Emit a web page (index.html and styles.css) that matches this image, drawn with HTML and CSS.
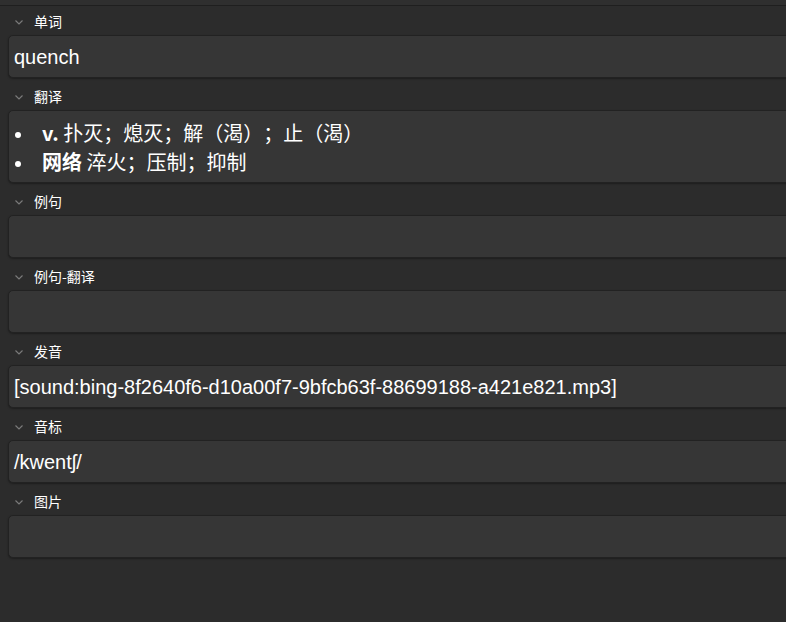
FILE: index.html
```html
<!DOCTYPE html>
<html lang="zh">
<head>
<meta charset="utf-8">
<title>Editor</title>
<link rel="stylesheet" href="styles.css">
</head>
<body>
<div class="topstrip"></div>
<div class="fields">
  <div class="field-block">
    <div class="label-row"><svg class="chev" viewBox="0 0 8 5"><path d="M0.5 0.5 L4 4 L7.5 0.5"/></svg><span class="label">单词</span></div>
    <div class="field"><div class="content">quench</div></div>
  </div>
  <div class="field-block">
    <div class="label-row"><svg class="chev" viewBox="0 0 8 5"><path d="M0.5 0.5 L4 4 L7.5 0.5"/></svg><span class="label">翻译</span></div>
    <div class="field field-rich">
      <ul class="defs">
        <li><b>v.</b> 扑灭；熄灭；解（渴）；止（渴）</li>
        <li><b>网络</b> 淬火；压制；抑制</li>
      </ul>
    </div>
  </div>
  <div class="field-block">
    <div class="label-row"><svg class="chev" viewBox="0 0 8 5"><path d="M0.5 0.5 L4 4 L7.5 0.5"/></svg><span class="label">例句</span></div>
    <div class="field"><div class="content"></div></div>
  </div>
  <div class="field-block">
    <div class="label-row"><svg class="chev" viewBox="0 0 8 5"><path d="M0.5 0.5 L4 4 L7.5 0.5"/></svg><span class="label">例句-翻译</span></div>
    <div class="field"><div class="content"></div></div>
  </div>
  <div class="field-block">
    <div class="label-row"><svg class="chev" viewBox="0 0 8 5"><path d="M0.5 0.5 L4 4 L7.5 0.5"/></svg><span class="label">发音</span></div>
    <div class="field"><div class="content">[sound:bing-8f2640f6-d10a00f7-9bfcb63f-88699188-a421e821.mp3]</div></div>
  </div>
  <div class="field-block">
    <div class="label-row"><svg class="chev" viewBox="0 0 8 5"><path d="M0.5 0.5 L4 4 L7.5 0.5"/></svg><span class="label">音标</span></div>
    <div class="field"><div class="content">/kwentʃ/</div></div>
  </div>
  <div class="field-block">
    <div class="label-row"><svg class="chev" viewBox="0 0 8 5"><path d="M0.5 0.5 L4 4 L7.5 0.5"/></svg><span class="label">图片</span></div>
    <div class="field"><div class="content"></div></div>
  </div>
</div>
</body>
</html>
```

FILE: styles.css
```css
html, body {
  margin: 0;
  padding: 0;
}
body {
  background: #2c2c2c;
  color: #ffffff;
  font-family: "Liberation Sans", "Noto Sans CJK SC", sans-serif;
  overflow: hidden;
  width: 786px;
  height: 622px;
}
.topstrip {
  height: 5px;
  background: #2f2f2f;
  border-bottom: 1px solid #1f1f1f;
}
.fields {
  display: flex;
  flex-direction: column;
}
.field-block {
  display: flex;
  flex-direction: column;
  margin-bottom: 3px;
}
.label-row {
  height: 29px;
  display: flex;
  align-items: center;
  padding-left: 15px;
  gap: 11px;
}
.chev {
  width: 8px;
  height: 5px;
  margin-top: 4px;
  fill: none;
  stroke: #7a7a7a;
  stroke-width: 1.2;
}
.label {
  font-family: "Noto Sans CJK SC", sans-serif;
  font-size: 14px;
  line-height: 16px;
  color: #ffffff;
}
.field {
  margin-left: 8px;
  margin-right: -12px;
  background: #363636;
  border: 1px solid #222222;
  border-radius: 5px;
  box-shadow: 0 1px 2px rgba(0, 0, 0, 0.35);
  height: 41px;
  box-sizing: content-box;
}
.content {
  padding: 10px 5px 8px;
  font-size: 20px;
  line-height: 23px;
  white-space: nowrap;
}
.field-rich {
  height: 71px;
}
.defs {
  margin: 0;
  padding: 7px 0 7px 6px;
  font-family: "Noto Sans CJK SC", serif;
  font-size: 20px;
  line-height: 29px;
  list-style: none;
  text-spacing-trim: space-all;
  font-feature-settings: "chws" 0, "halt" 0, "palt" 0;
  white-space: nowrap;
}
.defs li::before {
  content: "";
  display: inline-block;
  width: 6px;
  height: 6px;
  border-radius: 50%;
  background: #ffffff;
  margin-right: 21px;
  vertical-align: middle;
  position: relative;
  top: -1px;
}
.defs b {
  font-weight: bold;
}
```
